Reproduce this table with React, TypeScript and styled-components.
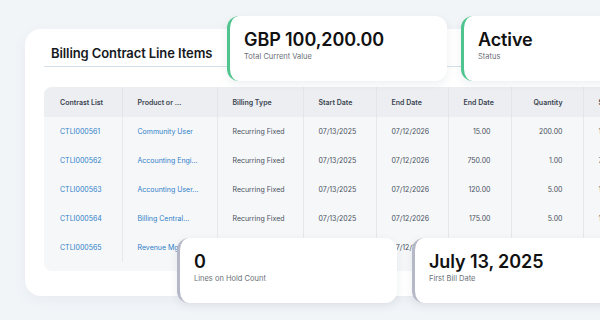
import styled, { createGlobalStyle } from "styled-components";

const GlobalStyle = createGlobalStyle`
  html, body {
    margin: 0;
    padding: 0;
    background: #f2f5f8;
    overflow: hidden;
  }
  body {
    font-family: Inter, "Liberation Sans", sans-serif;
  }
`;

type Row = {
  id: string;
  product: string;
  billing: string;
  start: string;
  end: string;
  amount: string;
  quantity: string;
};

const rows: Row[] = [
  { id: "CTLI000561", product: "Community User", billing: "Recurring Fixed", start: "07/13/2025", end: "07/12/2026", amount: "15.00", quantity: "200.00" },
  { id: "CTLI000562", product: "Accounting Engi...", billing: "Recurring Fixed", start: "07/13/2025", end: "07/12/2026", amount: "750.00", quantity: "1.00" },
  { id: "CTLI000563", product: "Accounting User...", billing: "Recurring Fixed", start: "07/13/2025", end: "07/12/2026", amount: "120.00", quantity: "5.00" },
  { id: "CTLI000564", product: "Billing Central...", billing: "Recurring Fixed", start: "07/13/2025", end: "07/12/2026", amount: "175.00", quantity: "5.00" },
  { id: "CTLI000565", product: "Revenue Mgmt...", billing: "Recurring Fixed", start: "07/13/2025", end: "07/12/2026", amount: "90.00", quantity: "3.00" },
];

// 카드 위치 (겹쳐서 떠 있는 요약 카드)
const stats = [
  { value: "GBP 100,200.00", label: "Total Current Value", left: 227, top: 16, accent: "#4fc48e" },
  { value: "Active", label: "Status", left: 461, top: 16, accent: "#4fc48e" },
  { value: "0", label: "Lines on Hold Count", left: 177, top: 238, accent: "#b5b8c6" },
  { value: "July 13, 2025", label: "First Bill Date", left: 412, top: 238, accent: "#b5b8c6" },
];

function App(): JSX.Element {
  return (
    <Stage>
      <GlobalStyle />
      <MainCard>
        <CardHeader>
          <Title>Billing Contract Line Items</Title>
        </CardHeader>
        <TableWrap>
          <Table>
            <colgroup>
              <col style={{ width: 78 }} />
              <col style={{ width: 95 }} />
              <col style={{ width: 86 }} />
              <col style={{ width: 73 }} />
              <col style={{ width: 72 }} />
              <col style={{ width: 63 }} />
              <col style={{ width: 72 }} />
              <col style={{ width: 80 }} />
            </colgroup>
            <thead>
              <tr>
                <Th>Contrast List</Th>
                <Th>Product or ...</Th>
                <Th>Billing Type</Th>
                <Th>Start Date</Th>
                <Th>End Date</Th>
                <Th $right>End Date</Th>
                <Th $right>Quantity</Th>
                <Th>Sales Price</Th>
              </tr>
            </thead>
            <tbody>
              {rows.map((r) => (
                <tr key={r.id}>
                  <Td $link>{r.id}</Td>
                  <Td $link>{r.product}</Td>
                  <Td>{r.billing}</Td>
                  <Td>{r.start}</Td>
                  <Td>{r.end}</Td>
                  <Td $right>{r.amount}</Td>
                  <Td $right>{r.quantity}</Td>
                  <Td>{r.amount}</Td>
                </tr>
              ))}
            </tbody>
          </Table>
        </TableWrap>
      </MainCard>

      {stats.map((s) => (
        <StatCard key={s.label} $accent={s.accent} style={{ left: s.left, top: s.top }}>
          <StatValue>{s.value}</StatValue>
          <StatLabel>{s.label}</StatLabel>
        </StatCard>
      ))}
    </Stage>
  );
}

export default App;

const Stage = styled.div`
  position: relative;
  width: 600px;
  height: 320px;
  overflow: hidden;
  padding: 29px 0 0 25px;
  box-sizing: border-box;
`;

const MainCard = styled.div`
  width: 640px;
  height: 267px;
  background: #fff;
  border-radius: 16px;
  box-shadow: 0 4px 14px rgba(40, 60, 90, 0.05);
  padding: 14px 0 0 19px;
  box-sizing: border-box;
  display: flex;
  flex-direction: column;
`;

const CardHeader = styled.div`
  border-bottom: 1px solid #d6e0ea;
  padding: 0 0 3px 7px;
`;

const Title = styled.h2`
  margin: 0;
  font-size: 13px;
  line-height: 20px;
  font-weight: 600;
  color: #16191d;
  letter-spacing: -0.1px;
`;

const TableWrap = styled.div`
  margin-top: 20px;
  background: #f6f7f9;
  border-radius: 8px;
  overflow: hidden;
  height: 184px;
`;

const Table = styled.table`
  border-collapse: collapse;
  table-layout: fixed;
  width: 619px;
`;

const Th = styled.th<{ $right?: boolean }>`
  height: 30px;
  padding: 0 ${(p) => (p.$right ? "20px" : "0")} 0 15px;
  background: #eceef1;
  border-left: 1px solid #e1e4e8;
  font-size: 7px;
  font-weight: 600;
  color: #3a4350;
  text-align: ${(p) => (p.$right ? "right" : "left")};
  white-space: nowrap;
  overflow: hidden;

  &:first-child {
    border-left: none;
    padding-left: 16px;
  }
`;

const Td = styled.td<{ $link?: boolean; $right?: boolean }>`
  height: 29px;
  padding: 0 ${(p) => (p.$right ? "20px" : "0")} 0 15px;
  border-left: 1px solid #e6e8eb;
  font-size: 7px;
  font-weight: 400;
  color: ${(p) => (p.$link ? "#2f7fc8" : "#46505c")};
  text-align: ${(p) => (p.$right ? "right" : "left")};
  white-space: nowrap;
  overflow: hidden;

  &:first-child {
    border-left: none;
    padding-left: 16px;
  }
`;

const StatCard = styled.div<{ $accent: string }>`
  position: absolute;
  width: 220px;
  height: 65px;
  box-sizing: border-box;
  background: #fff;
  border-radius: 12px;
  border-left: 3px solid ${(p) => p.$accent};
  box-shadow: 0 3px 10px rgba(30, 45, 70, 0.08);
  padding: 13px 14px 0 14px;
  display: flex;
  flex-direction: column;
`;

const StatValue = styled.div`
  font-size: 18px;
  line-height: 22px;
  font-weight: 600;
  color: #111;
  letter-spacing: -0.1px;
`;

const StatLabel = styled.div`
  font-size: 7.5px;
  line-height: 10px;
  color: #6b6f76;
  margin-top: 1px;
`;
